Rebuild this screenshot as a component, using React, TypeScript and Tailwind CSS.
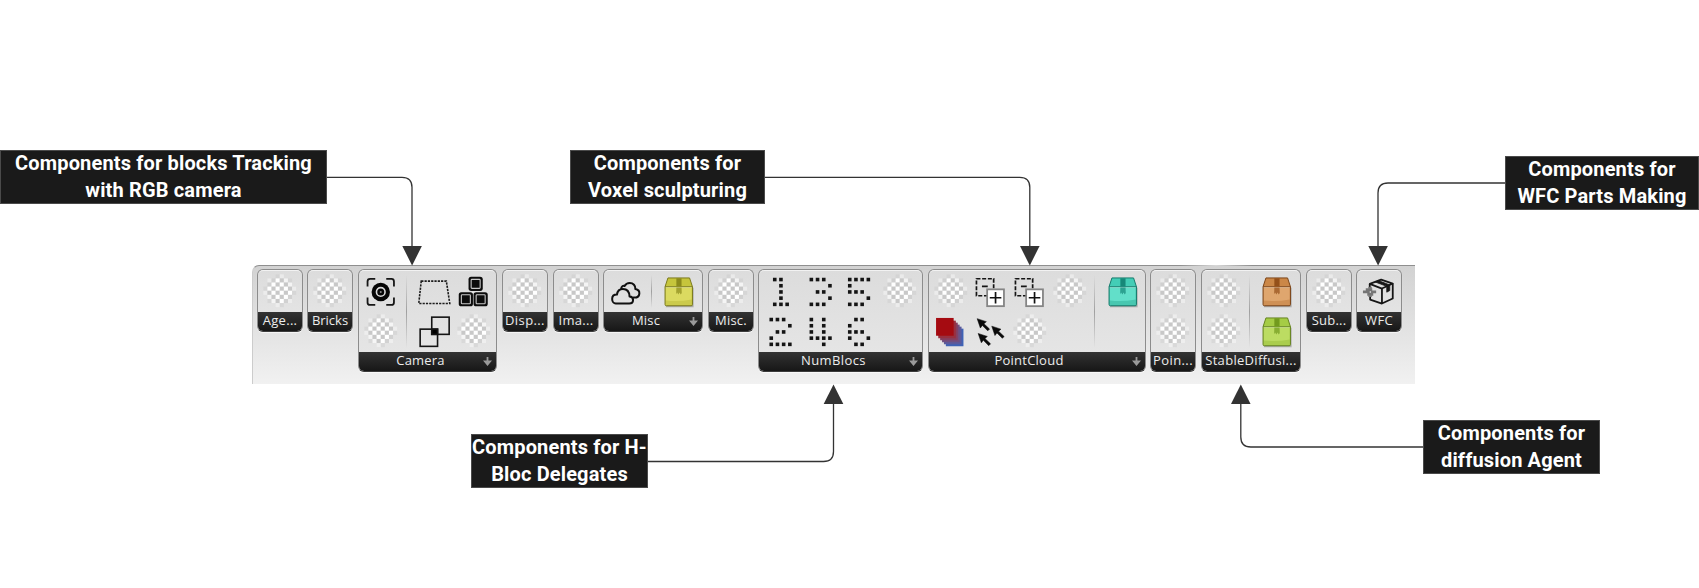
import React from "react";

type IconName =
  | "empty" | "focus" | "trapezoid" | "blocks" | "overlap" | "clouds"
  | "boxYellow" | "boxTeal" | "boxOrange" | "boxGreen"
  | "n1" | "n2" | "n3" | "n4" | "n5" | "n6"
  | "addRegion" | "layers" | "cursors" | "parcel";

type Column = IconName[] | "divider";

const DIGITS: Record<string, { x: number; rows: string[] }> = {
  n1: { x: -6, rows: ["11", "01", "01", "01", "111"] },
  n2: { x: -9.5, rows: ["111", "0001", "011", "1", "1111"] },
  n3: { x: -9.4, rows: ["111", "0001", "011", "0001", "111"] },
  n4: { x: -9.4, rows: ["101", "101", "101", "1111", "001"] },
  n5: { x: -10, rows: ["1111", "1", "111", "0001", "111"] },
  n6: { x: -10, rows: ["011", "1", "111", "1001", "011"] },
};

const BOXES: Record<string, { lid: string; body: string; low: string; tape: string; edge: string }> = {
  boxYellow: { lid: "#c6c53c", body: "#dbda60", low: "#cbca4c", tape: "#8c8a1c", edge: "#7b7a1c" },
  boxTeal: { lid: "#43cdb6", body: "#62dfc9", low: "#48c7b0", tape: "#168878", edge: "#157b6c" },
  boxOrange: { lid: "#cb8747", body: "#dfa66e", low: "#cf9055", tape: "#94501a", edge: "#7c4518" },
  boxGreen: { lid: "#a5cc45", body: "#bcdc62", low: "#aacd4e", tape: "#729a1e", edge: "#668420" },
};

function Checker() {
  const cells: React.ReactNode[] = [];
  for (let r = -4; r < 4; r++) {
    for (let c = -4; c < 4; c++) {
      const d = Math.hypot(c + 0.5, r + 0.5) * 4.1;
      if (d > 15.5) continue;
      cells.push(
        <rect
          key={`${r}_${c}`}
          x={c * 4.1}
          y={r * 4.1}
          width={4.1}
          height={4.1}
          fill={(r + c) % 2 === 0 ? "#ffffff" : "#c8c8c8"}
          opacity={d > 13.5 ? 0.4 : d > 11 ? 0.65 : 1}
        />
      );
    }
  }
  return <g>{cells}</g>;
}

function Digit({ name }: { name: string }) {
  const d = DIGITS[name];
  return (
    <g fill="#141414">
      {d.rows.map((row, y) =>
        row.split("").map((v, x) =>
          v === "1" ? (
            <rect key={`${x}_${y}`} x={d.x + x * 6.2 - 1.8} y={-12.4 + y * 6.2 - 1.8} width={3.6} height={3.6} />
          ) : null
        )
      )}
    </g>
  );
}

function Box({ name }: { name: string }) {
  const c = BOXES[name];
  return (
    <g strokeLinejoin="round">
      <path d="M-13 -4.5H15V15.5H-13Z" fill="#000" opacity="0.12" />
      <path d="M-12.6 -4H14.6V14.8H-12.6Z" fill="#000" opacity="0.18" />
      <path d="M-13.7 -5.2H13.7V12.5Q13.7 13.8 12.4 13.8H-12.4Q-13.7 13.8 -13.7 12.5Z" fill={c.low} stroke={c.edge} />
      <path d="M-12.8 -5H12.8V7.5Q0 10 -12.8 8.5Z" fill={c.body} />
      <path d="M-10.8 -14H10.8L13.7 -5.2H-13.7Z" fill={c.lid} stroke={c.edge} />
      <path d="M-2.4 -13.6H2.8V-5H-2.4Z" fill={c.tape} />
      <path d="M-2.4 -5H2.8L3 1L2 2.6L0.8 0.6L-0.4 2.6L-1.6 0.6L-2.6 2.2Z" fill={c.tape} opacity="0.7" />
      <path d="M-13.2 -4.6H13.2" stroke="#fff" strokeWidth="0.7" opacity="0.45" />
    </g>
  );
}

const CURSOR = "M0 0L9.2 3L6.8 5L12.4 10.4L10.6 12.2L5.2 6.8L3.2 9.4Z";

function Glyph({ name }: { name: IconName }) {
  if (name in DIGITS) return <Digit name={name} />;
  if (name in BOXES) return <Box name={name} />;
  switch (name) {
    case "focus":
      return (
        <g fill="none" stroke="#161616" strokeWidth="1.8">
          <path d="M-13.2 -5.5V-10.5Q-13.2 -13 -10.7 -13H-5.5M5.5 -13H10.7Q13.2 -13 13.2 -10.5V-5.5M13.2 5.5V10.5Q13.2 13 10.7 13H5.5M-5.5 13H-10.7Q-13.2 13 -13.2 10.5V5.5" />
          <circle r="9.2" fill="#050505" stroke="none" />
          <circle r="4.3" stroke="#d8d8d8" strokeWidth="1.6" />
          <circle r="1" fill="#8a8a8a" stroke="none" />
        </g>
      );
    case "trapezoid":
      return <path d="M-12.5 -10.8H12.6L16 11.5H-15Z" fill="none" stroke="#1c1c1c" strokeWidth="1.6" strokeDasharray="2.2 1.1" />;
    case "blocks":
      return (
        <g>
          {[[-5.2, -15.2], [-15, 0.2], [-0.2, 0.2]].map(([x, y]) => (
            <g key={`${x}${y}`} transform={`translate(${x} ${y})`}>
              <rect width="14.2" height="14.2" rx="2.6" fill="#0c0c0c" />
              <rect x="2.6" y="2.6" width="9" height="9" rx="0.8" fill="none" stroke="#c9c9c9" strokeWidth="1.1" />
            </g>
          ))}
        </g>
      );
    case "overlap":
      return (
        <g fill="none" stroke="#141414" strokeWidth="1.6">
          <rect x="-2" y="-14.8" width="17.4" height="17.2" />
          <rect x="-13.6" y="-2.8" width="17.4" height="17.2" />
          <rect x="-2" y="-2.8" width="5.8" height="5.2" fill="#000" />
        </g>
      );
    case "clouds":
      return (
        <g fill="none" stroke="#111" strokeWidth="2" strokeLinejoin="round" strokeLinecap="round">
          <path d="M-10 11.5H3.5C6.2 11.5 7.3 9.8 7.3 8C7.3 6 5.8 4.6 3.8 4.5C3.6 -0.5 0.8 -3 -2.8 -3C-6.2 -3 -8.4 -0.7 -8.8 2.6C-12 2.6 -13.6 4.7 -13.6 7C-13.6 9.5 -12 11.5 -10 11.5Z" />
          <path d="M-4.5 -3.2C-4.6 -5.6 -2.6 -6.6 -1 -6C0 -8.2 1.8 -9 4 -9C7.6 -9 9.8 -6.2 9.6 -3C12.4 -2.6 13.8 -1 13.6 1.6C13.4 4.4 11 5.8 7.8 5.6" />
        </g>
      );
    case "addRegion":
      return (
        <g>
          <rect x="-14.3" y="-13.2" width="17.2" height="17" fill="none" stroke="#141414" strokeWidth="1.7" strokeDasharray="4 1.7" />
          <path d="M-8.8 -5.6H-3" stroke="#141414" strokeWidth="1.8" />
          <rect x="-3.6" y="-2.6" width="16.8" height="16.8" fill="#fff" stroke="#858585" strokeWidth="1.8" />
          <path d="M4.8 0V11.6M-1 5.8H10.6" stroke="#111" strokeWidth="1.7" />
        </g>
      );
    case "layers":
      return (
        <g>
          {["#3f62b5", "#5a5a9c", "#704f80", "#853f60", "#983040"].map((f, i) => (
            <rect key={f} x={-4.9 - i * 1.9} y={-3.3 - i * 2} width="17.6" height="17.6" fill={f} />
          ))}
          <rect x="-14.7" y="-14" width="17.6" height="17.8" fill="#a50b11" />
        </g>
      );
    case "cursors":
      return (
        <g fill="#0a0a0a" stroke="#0a0a0a" strokeWidth="0.5">
          {[[-13.6, -13.3], [1, -5.8], [-12.6, 1.5]].map(([x, y]) => (
            <path key={x} d={CURSOR} transform={`translate(${x} ${y})`} />
          ))}
        </g>
      );
    case "parcel":
      return (
        <g fill="none" stroke="#161616" strokeWidth="1.8" strokeLinejoin="round">
          <path d="M-9 -8L2.4 -12.4L14 -8.4L3.2 -3.4Z" />
          <path d="M3.2 -3.4V11.6L14 6.6V-8.4M3.2 11.6L-8.6 7.6V4.2M-9 -8V-3.8" />
          <path d="M-3.6 -10L-0.4 -11.4L11 -7V-1.4L8 0.2V-5.6Z" fill="#161616" strokeWidth="0.8" />
          <path d="M-15.8 0H-9M-13 -2.4H-6.5M-11.5 2.4H-5.5M-8 0H-2.6" stroke="#757575" strokeWidth="2.8" />
          <path d="M-10.4 -4.2H-7M-10.4 4.2H-7" stroke="#757575" strokeWidth="1.8" />
        </g>
      );
    default:
      return null;
  }
}

function Icon({ name }: { name: IconName }) {
  return (
    <svg className="block h-[39.5px] w-[39.5px] shrink-0" viewBox="-19.75 -19.75 39.5 39.5">
      {name === "empty" ? (
        <Checker />
      ) : (
        <g transform="translate(0 1.2)">
          <Glyph name={name} />
        </g>
      )}
    </svg>
  );
}

interface PanelProps {
  label: string;
  size: string;
  tall?: boolean;
  more?: boolean;
  text?: string;
  columns: Column[];
}

const PANELS: PanelProps[] = [
  { label: "Age...", size: "w-[46px] ml-[4px]", text: "tracking-[0.3px]", columns: [["empty"]] },
  { label: "Bricks", size: "w-[46px] ml-[4px]", columns: [["empty"]] },
  {
    label: "Camera", size: "w-[139px] ml-[5px]", tall: true, more: true, text: "tracking-[0.2px]",
    columns: [["focus", "empty"], "divider", ["trapezoid", "overlap"], ["blocks", "empty"]],
  },
  { label: "Disp...", size: "w-[46px] ml-[5px]", text: "tracking-[0.4px]", columns: [["empty"]] },
  { label: "Ima...", size: "w-[46px] ml-[5px]", text: "tracking-[0.3px]", columns: [["empty"]] },
  { label: "Misc", size: "w-[100px] ml-[4px]", more: true, text: "tracking-[0.2px]", columns: [["clouds"], "divider", ["boxYellow"]] },
  { label: "Misc.", size: "w-[46px] ml-[5px]", text: "tracking-[0.2px]", columns: [["empty"]] },
  {
    label: "NumBlocs", size: "w-[165px] ml-[4px]", tall: true, more: true, text: "tracking-[0.4px]",
    columns: [["n1", "n2"], ["n3", "n4"], ["n5", "n6"], ["empty"]],
  },
  {
    label: "PointCloud", size: "w-[218px] ml-[5px]", tall: true, more: true, text: "tracking-[0.25px] pr-[2px]",
    columns: [["empty", "layers"], ["addRegion", "cursors"], ["addRegion", "empty"], ["empty"], "divider", ["boxTeal"]],
  },
  { label: "Poin...", size: "w-[46px] ml-[4px]", tall: true, text: "tracking-[0.4px]", columns: [["empty", "empty"]] },
  {
    label: "StableDiffusi...", size: "w-[100px] ml-[5px]", tall: true, text: "tracking-[0.3px]",
    columns: [["empty", "empty"], "divider", ["boxOrange", "boxGreen"]],
  },
  { label: "Sub...", size: "w-[46px] ml-[5px]", text: "tracking-[0.2px]", columns: [["empty"]] },
  { label: "WFC", size: "w-[46px] ml-[4px]", text: "tracking-[0.3px]", columns: [["parcel"]] },
];

function Panel({ label, size, text, tall, more, columns }: PanelProps) {
  return (
    <section
      className={`${size} ${tall ? "h-[103px]" : "h-[63px]"} flex shrink-0 flex-col overflow-hidden rounded-[6px] border border-[#8c8c8c] border-b-[#3c3c3c] bg-linear-to-b from-[#dcdcdc] to-[#e7e7e7] shadow-[0_1px_1px_rgba(255,255,255,0.7)]`}
    >
      <div className="flex min-h-0 flex-1 rounded-t-[5px] border-t border-[#f2f2f2] px-[2px]">
        {columns.map((col, i) =>
          col === "divider" ? (
            <div key={i} className="flex w-[13.5px] shrink-0 justify-center py-1">
              <div className="mr-[2px] w-px bg-linear-to-b from-transparent via-[#a0a0a0] to-transparent" />
            </div>
          ) : (
            <div key={i} className="flex shrink-0 flex-col">
              {col.map((name, j) => (
                <Icon key={j} name={name} />
              ))}
            </div>
          )
        )}
      </div>
      <footer className="flex h-[19px] shrink-0 items-center bg-linear-to-b from-[#333333] to-[#171717] text-[13px] leading-[17px] text-[#ececec]">
        <span className={`flex-1 pb-[2px] text-center whitespace-nowrap ${text ?? ""}`}>{label}</span>
        {more && (
          <svg className="mr-[3px] h-[11px] w-[11px]" viewBox="0 0 11 11">
            <path d="M4.6 1H6.4V4.6H10L5.5 10L1 4.6H4.6Z" fill="#9a9a9a" />
          </svg>
        )}
      </footer>
    </section>
  );
}

interface CalloutProps {
  place: string;
  lines: [string, string];
}

const CALLOUTS: CalloutProps[] = [
  { place: "left-0 top-[150px] w-[327px]", lines: ["Components for blocks Tracking", "with RGB camera"] },
  { place: "left-[570px] top-[150px] w-[195px]", lines: ["Components for", "Voxel sculpturing"] },
  { place: "left-[1505px] top-[156px] w-[194px]", lines: ["Components for", "WFC Parts Making"] },
  { place: "left-[471px] top-[434px] w-[177px]", lines: ["Components for H-", "Bloc Delegates"] },
  { place: "left-[1423px] top-[420px] w-[177px]", lines: ["Components for", "diffusion Agent"] },
];

function Callout({ place, lines }: CalloutProps) {
  return (
    <div
      className={`absolute ${place} h-[54px] border border-[#4a4a4a] bg-[#1a1a1a] text-center font-['Roboto','Noto_Sans',sans-serif] text-[20px] leading-[27px] font-bold tracking-[0.15px] whitespace-nowrap text-white`}
    >
      <div className="-mt-px">{lines[0]}</div>
      <div>{lines[1]}</div>
    </div>
  );
}

function Connectors() {
  return (
    <svg className="pointer-events-none absolute top-0 left-0 h-[588px] w-[1699px]" viewBox="0 0 1699 588">
      <g fill="none" stroke="#333333" strokeWidth="1.3">
        <path d="M327 177.3H402Q412 177.3 412 187.3V247" />
        <path d="M765 177.3H1019.8Q1029.8 177.3 1029.8 187.3V247" />
        <path d="M1505 183H1388Q1378 183 1378 193V247" />
        <path d="M648 461.5H823.5Q833.5 461.5 833.5 451.5V403" />
        <path d="M1423 447H1250.8Q1240.8 447 1240.8 437V403" />
      </g>
      <g fill="#333333">
        <path d="M402.3 246H421.9L412.1 265.5Z" />
        <path d="M1020 246H1039.6L1029.8 265.5Z" />
        <path d="M1368.3 246H1387.9L1378.1 265.5Z" />
        <path d="M823.7 404H843.3L833.5 384.4Z" />
        <path d="M1231 404H1250.6L1240.8 384.4Z" />
      </g>
    </svg>
  );
}

export default function App() {
  return (
    <main className="relative h-[588px] w-[1699px] overflow-hidden bg-white pt-[265px] pl-[252px] font-['Open_Sans','Noto_Sans',sans-serif]">
      <div className="flex h-[118.5px] w-[1163px] items-start rounded-tl-[7px] border-t border-l border-t-[#8f8f8f] border-l-[#cccccc] bg-linear-to-b from-[#d2d2d2] to-[#f1f1f1] pt-[3px]">
        {PANELS.map((p) => (
          <Panel key={p.label} {...p} />
        ))}
      </div>
      <div className="absolute top-[265px] left-[1180px] h-px w-[72px] bg-linear-to-r from-[#d8d8d8]/0 via-[#d8d8d8] to-[#d8d8d8]/0" />
      {CALLOUTS.map((c) => (
        <Callout key={c.place} {...c} />
      ))}
      <Connectors />
    </main>
  );
}
